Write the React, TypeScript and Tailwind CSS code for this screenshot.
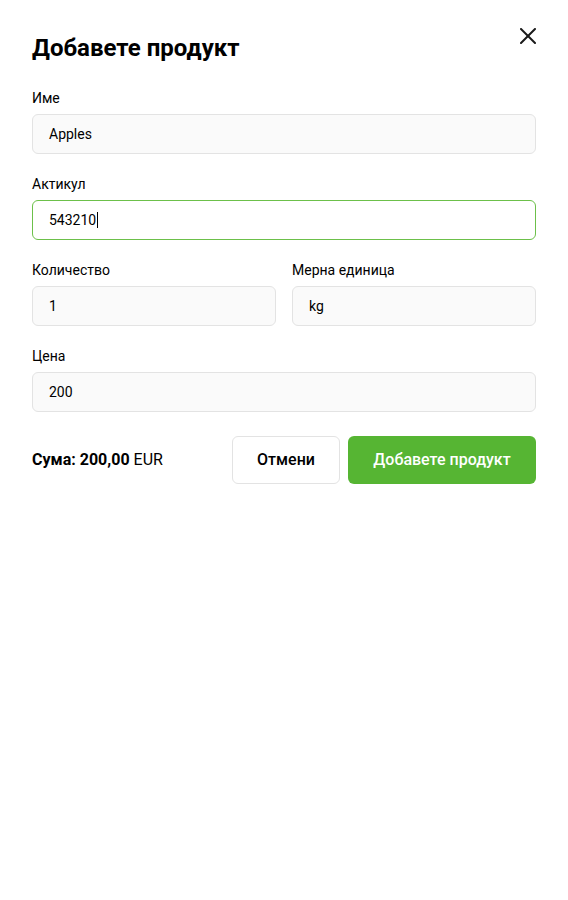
import React from 'react';

const font = { fontFamily: 'Roboto, "Noto Sans", sans-serif' };

function Field({ label, value, focused = false }: { label: string; value: string; focused?: boolean }) {
  return (
    <label className="flex flex-col gap-1.5">
      <span className="pt-px text-sm leading-[19px] text-black">{label}</span>
      <div
        className={`flex h-10 items-center rounded-md border px-4 text-sm text-black ${
          focused ? 'border-[#6cc04a] bg-white' : 'border-[#e3e3e3] bg-[#fafafa]'
        }`}
      >
        {value}
        {focused && <span className="ml-px inline-block h-4 w-px bg-black" />}
      </div>
    </label>
  );
}

export default function App() {
  return (
    <div className="min-h-[900px] w-[568px] bg-white" style={font}>
      <div className="relative px-8 pt-8">
        <button className="absolute right-[32px] top-[28px] flex h-4 w-4 items-center justify-center text-[#1a1a1a]">
          <svg width="16" height="16" viewBox="0 0 16 16" fill="none" stroke="currentColor" strokeWidth="2" strokeLinecap="round">
            <line x1="1" y1="1" x2="15" y2="15" />
            <line x1="15" y1="1" x2="1" y2="15" />
          </svg>
        </button>
        <h1 className="mb-6 text-2xl font-bold leading-8 text-black">Добавете продукт</h1>

        <div className="flex flex-col gap-5">
          <Field label="Име" value="Apples" />
          <Field label="Актикул" value="543210" focused />
          <div className="grid grid-cols-2 gap-4">
            <Field label="Количество" value="1" />
            <Field label="Мерна единица" value="kg" />
          </div>
          <Field label="Цена" value="200" />
        </div>

        <div className="mt-6 flex items-center justify-between">
          <div className="text-base text-black">
            <span className="font-bold">Сума: 200,00</span> EUR
          </div>
          <div className="flex gap-2">
            <button className="h-12 w-[108px] rounded-md border border-[#e3e3e3] bg-white text-base font-medium text-black">
              Отмени
            </button>
            <button className="h-12 w-[188px] rounded-md bg-[#56b533] text-base font-medium text-white">
              Добавете продукт
            </button>
          </div>
        </div>
      </div>
    </div>
  );
}
